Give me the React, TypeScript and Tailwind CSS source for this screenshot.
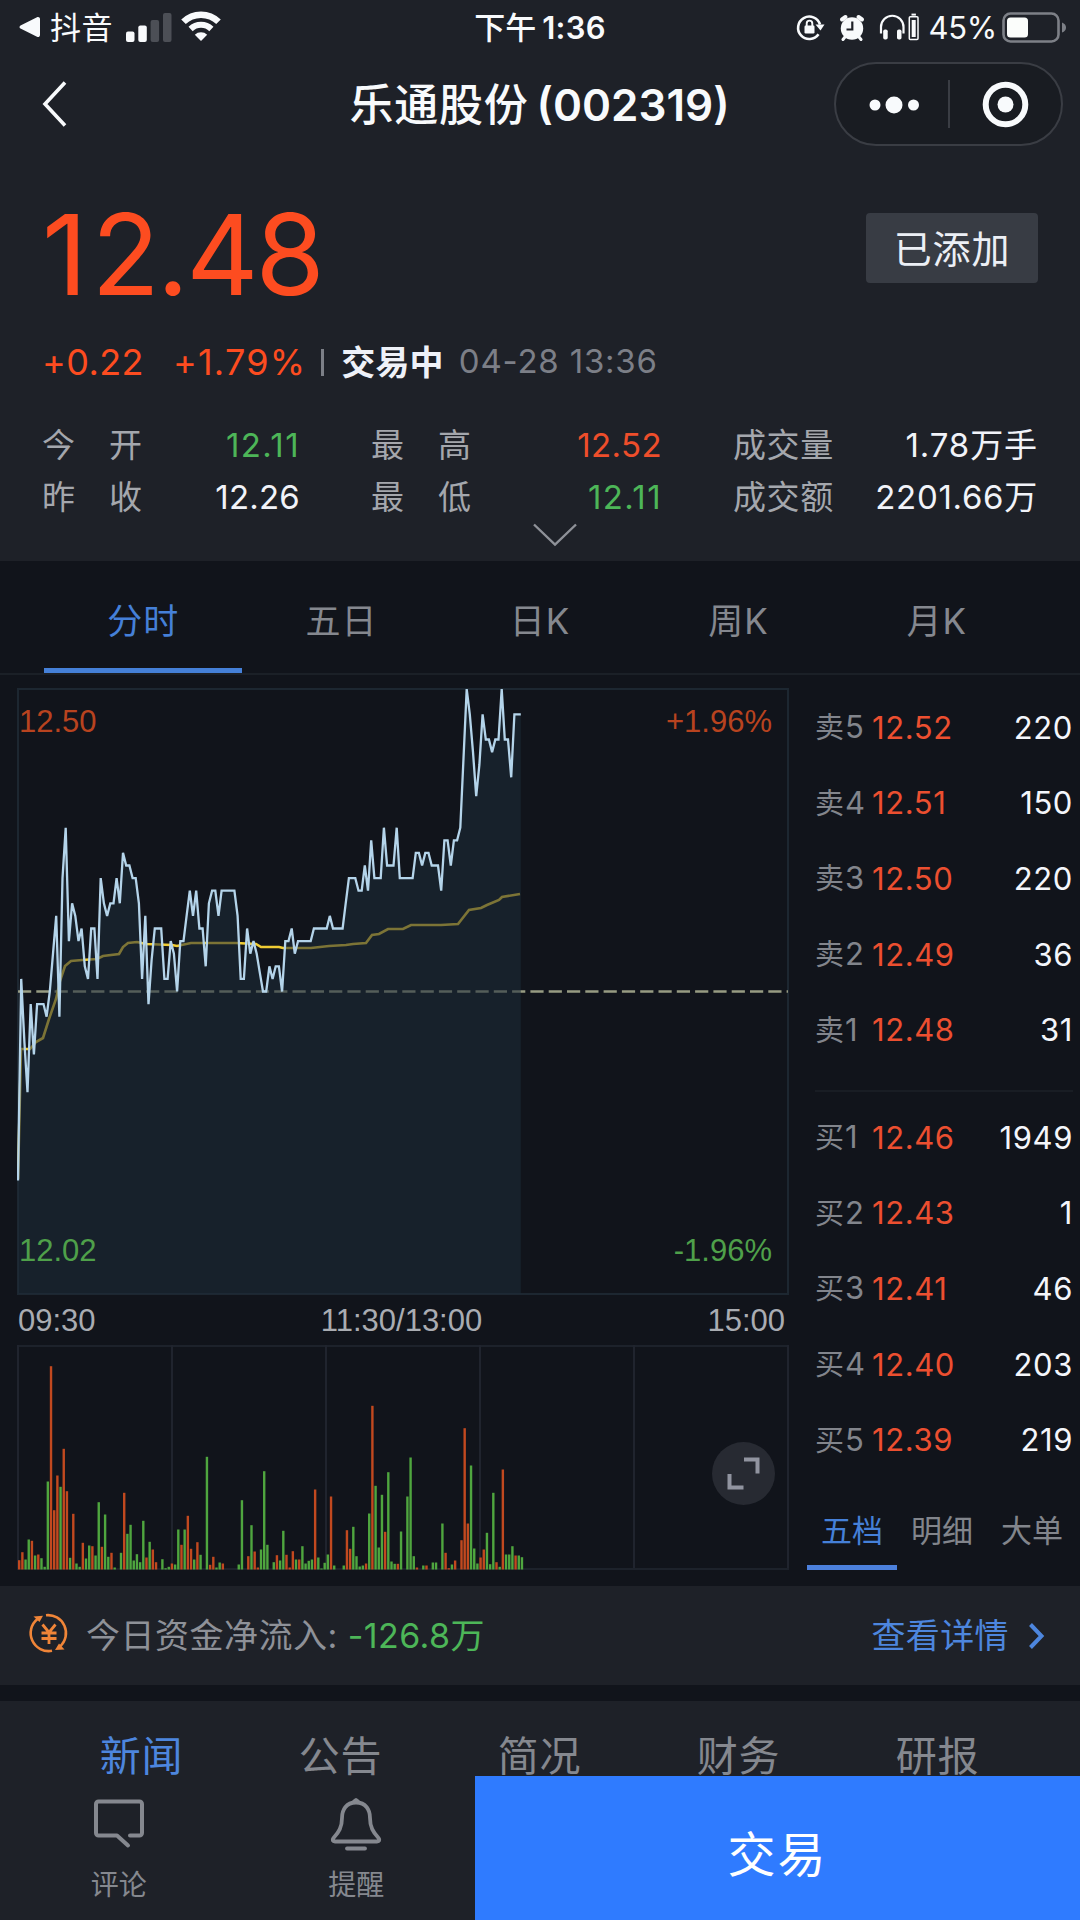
import clsx from "clsx";

const RED = "#c2491f";
const GREEN = "#4fa63f";

// one value per minute, in cents relative to yesterday's close (12.26)
const prices = [
    -15, 1, -4, -8, -1, -5, -1, -1, -1, -2, 0, 3, 6, -2, 9, 13, 4, 7, 6, 4,
    5, 2, 1, 5, 5, 1, 9, 7, 6, 7, 7, 9, 7, 11, 10, 10, 9, 9, 7, 1,
    6, -1, 2.5, 5, 5, 5, 1, 1, 4, 3, 0, 4, 4, 6, 8, 6, 8, 5, 5, 2,
    7, 8, 8, 6, 8, 8, 8, 8, 8, 6, 1, 1, 5, 3, 4, 3, 1.5, 0, 0, 2,
    1, 2, 2, 0, 4, 4, 5, 3, 4, 4, 4, 4, 4, 5, 5, 5, 5, 5, 6, 5,
    5, 5, 5, 7, 9, 9, 9, 8, 8, 10, 8, 12, 9, 9, 9, 13, 10, 10, 10, 13,
    9, 9, 9, 9, 9, 11, 11, 10, 11, 11, 10, 10, 10, 8, 12, 12, 10, 12, 12, 13,
    18.5, 24, 22, 19, 15.5, 18, 22, 20, 20, 19, 20, 20, 24, 20, 20, 17, 22, 22, 22,
];

const average = "1,491 4,361 13,361 19,354 26,350 32,331 39,311 43,293 48,278 54,273 65,272 80,271 86,268 102,266 106,259 111,255 120,254 129,256 155,257 160,258 174,255 219,255 239,256 244,259 262,259 266,260 294,260 312,258 329,257 336,256 349,255 355,247 362,246 371,241 386,241 394,237 424,237 441,236 452,222 464,220 470,217 482,212 485,209 503,206";

// up minutes are positive, down minutes negative
const volumes = [
    28, 52, -30, -90, 86, -42, 45, -34, -8, -264, 610, 178, 282, -248, 362, 235, -35, 167, -18, -8,
    80, -33, -72, 70, -42, -202, 68, -165, -38, 50, -6, 0, -50, 230, -107, -134, -27, -46, -22, -146,
    36, -83, 60, 22, 0, -31, -4, -8, 18, -15, -120, 74, -120, 161, 62, -30, 82, -44, 0, -338,
    14, 38, -6, -21, 18, 0, 0, 0, 0, -15, -208, 0, 40, -133, 54, 6, -60, -295, -74, 0,
    -22, 43, -27, -116, 44, 6, 55, -30, 30, -70, -18, -26, -30, 240, -36, -3, -20, -45, 219, -12,
    0, 0, -12, 118, 62, -128, -40, -9, -12, 18, -168, 491, -251, -66, -224, 113, -292, -24, -17, 17,
    -114, 0, -219, -336, -40, 6, 0, -12, 12, 0, -21, -21, 0, -138, 50, 4, -15, 27, 0, 88,
    424, 138, -312, -63, -18, 36, 60, -110, -16, -230, 22, -8, 300, -45, -45, -70, 42, -42, -37,
];

const STEP = 3.182;

const linePoints = prices
    .map((p, i) => `${(1 + i * STEP).toFixed(1)},${(303.5 - p * 12.6).toFixed(1)}`)
    .join(" ");

const sells = [
    ["卖5", "12.52", "220"],
    ["卖4", "12.51", "150"],
    ["卖3", "12.50", "220"],
    ["卖2", "12.49", "36"],
    ["卖1", "12.48", "31"],
];

const buys = [
    ["买1", "12.46", "1949"],
    ["买2", "12.43", "1"],
    ["买3", "12.41", "46"],
    ["买4", "12.40", "203"],
    ["买5", "12.39", "219"],
];

function StatusBar() {
    return (
        <div className="flex h-[54px] items-center justify-between pl-[19px] pr-[14px] text-[31px] leading-[31px]">
            <div className="flex w-[400px] items-center">
                <svg width="21" height="22" viewBox="0 0 21 22" fill="#f8fafc">
                    <path d="M1.5 9.4 18 1.2c1.5-.7 3 .2 3 1.8v16c0 1.6-1.5 2.5-3 1.8L1.5 12.6c-1.3-.7-1.3-2.5 0-3.2Z" />
                </svg>
                <span className="ml-[10px] tracking-[0.5px]">抖音</span>
                <svg className="ml-[13px]" width="46" height="29" viewBox="0 0 46 29">
                    <rect x="0" y="18.5" width="8.5" height="10.5" rx="2" fill="#f8fafc" />
                    <rect x="12.3" y="12.5" width="8.5" height="16.5" rx="2" fill="#f8fafc" />
                    <rect x="24.6" y="7" width="8.5" height="22" rx="2" fill="#4c4f56" />
                    <rect x="37" y="0" width="8.5" height="29" rx="2" fill="#4c4f56" />
                </svg>
                <svg className="mb-[2px] ml-[9px]" width="40" height="30" viewBox="0 0 40 30" fill="none" stroke="#f8fafc">
                    <path d="M2.5 10.8a25 25 0 0 1 35 0" strokeWidth="6.5" />
                    <path d="M9.6 18a15 15 0 0 1 20.8 0" strokeWidth="6" />
                    <path d="M20 30l-6.2-6.2a9 9 0 0 1 12.4 0Z" fill="#f8fafc" stroke="none" />
                </svg>
            </div>
            <div className="mr-[5px] whitespace-nowrap font-medium">下午<span className="ml-[6px] font-semibold tracking-[0.2px]">1:36</span></div>
            <div className="flex w-[400px] items-center justify-end">
                <svg width="29" height="28" viewBox="0 0 29 28" fill="none" stroke="#f8fafc" strokeWidth="2.6">
                    <path d="M22.5 21.2A11.2 11.2 0 1 1 24 11.5" />
                    <path d="M19.5 11.5h9L24.5 17.5Z" fill="#f8fafc" stroke="none" />
                    <rect x="8.5" y="12.5" width="10" height="8" rx="1.2" fill="#f8fafc" stroke="none" />
                    <path d="M10.7 13v-2.6a2.8 2.8 0 0 1 5.6 0V13" strokeWidth="1.9" />
                </svg>
                <svg className="ml-[14px]" width="26" height="27" viewBox="0 0 26 27">
                    <circle cx="13" cy="14.5" r="11.2" fill="#f8fafc" />
                    <path d="M3 5.5 6.5 3M19.5 3l3.500 2.5" stroke="#f8fafc" strokeWidth="4" strokeLinecap="round" />
                    <path d="M6 23l-2 2.5M20 23l2 2.5" stroke="#f8fafc" strokeWidth="3" strokeLinecap="round" />
                    <path d="M13.3 7.5v8H7.5" stroke="#1e2128" strokeWidth="2.2" fill="none" />
                </svg>
                <svg className="ml-[14px]" width="41" height="28" viewBox="0 0 41 28" fill="none" stroke="#f8fafc">
                    <path d="M2 20.5V14a11 11 0 0 1 22.5 0v6.5" strokeWidth="2.2" />
                    <rect x="4.2" y="16.5" width="4.5" height="10" rx="1.8" fill="#f8fafc" stroke="none" />
                    <rect x="18" y="16.5" width="4.5" height="10" rx="1.8" fill="#f8fafc" stroke="none" />
                    <rect x="30.3" y="3.7" width="8.7" height="22.7" rx="1" strokeWidth="1.5" />
                    <rect x="32.7" y="7" width="4" height="17" fill="#f8fafc" stroke="none" />
                    <path d="M32.5 1.6h4.4" strokeWidth="2" />
                </svg>
                <span className="ml-[9px] tracking-[-0.3px]">45%</span>
                <svg className="ml-[5px]" width="64" height="31" viewBox="0 0 64 31">
                    <rect x="1.5" y="1.5" width="55" height="28" rx="7" fill="none" stroke="#7d8087" strokeWidth="2.6" />
                    <rect x="5" y="5.5" width="21" height="20" rx="3.5" fill="#fbfdfb" />
                    <path d="M60 10.5q4 1.5 4 5t-4 5Z" fill="#7d8087" />
                </svg>
            </div>
        </div>
    );
}

function NavBar() {
    return (
        <div className="flex h-[102px] items-center justify-between pb-[2px] pl-[42px] pr-[17px]">
            <div className="w-[229px]">
                <svg width="26" height="46" viewBox="0 0 26 46" fill="none" stroke="#f8fafc" strokeWidth="3.6">
                    <path d="M23 1.5 3 23l20 21.5" />
                </svg>
            </div>
            <div className="mr-[26px] whitespace-nowrap pt-[1px] text-[44px] font-medium leading-[60px] tracking-[0.8px]">
                乐通股份<span className="ml-[8px] font-semibold tracking-[0px]">(002319)</span>
            </div>
            <div className="flex h-[84px] w-[229px] items-center rounded-full border-2 border-[#3a3d44] bg-[#191c22]">
                <svg width="225" height="80" viewBox="0 0 225 80" fill="#f8fafc">
                    <circle cx="39" cy="41" r="5.5" />
                    <circle cx="58" cy="41" r="8.5" />
                    <circle cx="77.5" cy="41" r="5.5" />
                    <rect x="112" y="16" width="2" height="48" fill="#3a3d44" />
                    <circle cx="169.5" cy="40.5" r="19.8" fill="none" stroke="#f8fafc" strokeWidth="6" />
                    <circle cx="169.5" cy="40.5" r="8" />
                </svg>
            </div>
        </div>
    );
}

function Quote() {
    return (
        <div className="relative h-[405px] px-[42px]">
            <div className="flex h-[164px] items-start justify-between">
                <div className="pt-[42px] text-[112px] leading-[112px] tracking-[-3px] text-[#fd4c20]">
                    <span className="tracking-[4px]">1</span>2.48
                </div>
                <div className="mt-[57px] flex h-[70px] w-[172px] items-center justify-center rounded-[4px] bg-[#383c44] pt-[2px] text-[38px] tracking-[0.8px] text-[#eceff5]">
                    已添加
                </div>
            </div>
            <div className="flex h-[84px] items-center whitespace-nowrap text-[36px] text-[#fd4c20]">
                <span className="w-[131px] tracking-[0.4px]">+0.22</span>
                <span className="tracking-[1.2px]">+1.79%</span>
                <span className="ml-[15px] h-[27px] w-[3px] bg-[#7c7f87]" />
                <span className="ml-[17px] text-[34px] font-bold tracking-[0.2px] text-[#eef1f8]">交易中</span>
                <span className="ml-[15px] text-[33px] tracking-[0.8px] text-[#7c7f87]">04-28 13:36</span>
            </div>
            <div className="grid grid-cols-[258px_71px_291px_71px_305px] pt-[15px] text-[33px] leading-[52px] text-[#a4a7ad]">
                <div className="flex justify-between">
                    <span className="tracking-[34px]">今开</span>
                    <span className="tracking-[1.4px] text-[#4db658]">12.11</span>
                </div>
                <div />
                <div className="flex justify-between">
                    <span className="tracking-[34px]">最高</span>
                    <span className="tracking-[0.4px] text-[#ee4e2b]">12.52</span>
                </div>
                <div />
                <div className="flex justify-between">
                    <span className="tracking-[0.6px]">成交量</span>
                    <span className="tracking-[0.9px] text-[#f1f3f9]">1.78万手</span>
                </div>
                <div className="flex justify-between">
                    <span className="tracking-[34px]">昨收</span>
                    <span className="tracking-[0.2px] text-[#f1f3f9]">12.26</span>
                </div>
                <div />
                <div className="flex justify-between">
                    <span className="tracking-[34px]">最低</span>
                    <span className="tracking-[1.4px] text-[#4db658]">12.11</span>
                </div>
                <div />
                <div className="flex justify-between">
                    <span className="tracking-[0.6px]">成交额</span>
                    <span className="tracking-[0.7px] text-[#f1f3f9]">2201.66万</span>
                </div>
            </div>
            <svg className="absolute left-[532px] top-[367px]" width="46" height="24" viewBox="0 0 46 24" fill="none" stroke="#8e9198" strokeWidth="2.4">
                <path d="M2 1.5 23 21.5 44 1.5" />
            </svg>
        </div>
    );
}

function PeriodTabs() {
    return (
        <div className="flex h-[114px] border-b-2 border-[#1b2027] px-[44px]">
            {["分时", "五日", "日K", "周K", "月K"].map((tab, index) => (
                <div
                    key={tab}
                    className={clsx(
                        "flex flex-1 justify-center border-b-[5px] pt-[37px] text-[35px] leading-[46px] tracking-[1px]",
                        index === 0 ? "border-[#4580d8] text-[#4580d8]" : "border-transparent text-[#85888f]"
                    )}>
                    {tab}
                </div>
            ))}
        </div>
    );
}

function PriceChart() {
    return (
        <div className="relative h-[608px] w-[772px] font-['Liberation_Sans',Arial,sans-serif] text-[31px] leading-[36px]">
            <svg width="772" height="608" viewBox="0 0 772 608" fill="none">
                <rect x="1" y="1" width="770" height="605" stroke="#1d2731" strokeWidth="2" />
                <path d="M1 303.5H771" stroke="#979b82" strokeWidth="2.4" strokeDasharray="13.2 5.1" />
                <polyline points={average} stroke="#f0cc34" strokeWidth="2.6" />
                <polygon points={`1,606 ${linePoints} 503.8,606`} fill="#1d2c39" fillOpacity="0.55" />
                <polyline points={linePoints} stroke="#b4d4ea" strokeWidth="2.3" />
            </svg>
            <span className="absolute left-[2px] top-[16px] text-[#b8431f]">12.50</span>
            <span className="absolute right-[17px] top-[16px] text-[#b8431f]">+1.96%</span>
            <span className="absolute left-[2px] top-[545px] text-[#4fa04a]">12.02</span>
            <span className="absolute right-[17px] top-[545px] text-[#4fa04a]">-1.96%</span>
        </div>
    );
}

function VolumeChart() {
    return (
        <div className="relative h-[227px]">
            <svg width="772" height="227" viewBox="0 0 772 227" fill="none">
                <path d="M0 1H772M0 224H772" stroke="#1d222b" strokeWidth="2" />
                {[1, 155, 309, 463, 617, 771].map((x) => (
                    <path key={x} d={`M${x} 0V223`} stroke="#20242e" strokeWidth="2" />
                ))}
                {volumes.map((v, i) => (
                    <rect
                        key={i}
                        x={(1 + i * STEP).toFixed(2)}
                        y={(224.5 - Math.abs(v) / 3).toFixed(1)}
                        width="2.4"
                        height={(Math.abs(v) / 3).toFixed(1)}
                        fill={v > 0 ? RED : GREEN}
                    />
                ))}
            </svg>
            <div className="absolute left-[695px] top-[97px] flex h-[63px] w-[63px] items-center justify-center rounded-full bg-[#272a32]">
                <svg width="33" height="33" viewBox="0 0 33 33" fill="none" stroke="#9194a0" strokeWidth="4">
                    <path d="M17 2.5h13.5V16.5M2.5 17v13.5H16.5" />
                </svg>
            </div>
        </div>
    );
}

function BookRow({ row }: { row: string[] }) {
    return (
        <div className="flex h-[75.6px] items-center text-[31px] leading-[40px]">
            <span className="w-[57px] whitespace-nowrap text-[#82858c]"><span className="text-[29px]">{row[0][0]}</span><span className="ml-[1px]">{row[0][1]}</span></span>
            <span className="tracking-[0.6px] text-[#ec4f30]">{row[1]}</span>
            <span className="ml-auto tracking-[0.6px] text-[#f4f6fb]">{row[2]}</span>
        </div>
    );
}

function OrderBook() {
    return (
        <div className="w-[273px]">
            <div className="pl-[8px] pr-[7px] pt-[2px]">
                {sells.map((row) => <BookRow key={row[0]} row={row} />)}
                <div className="mb-[8px] mt-[22px] h-[2px] bg-[#191d24]" />
                {buys.map((row) => <BookRow key={row[0]} row={row} />)}
            </div>
            <div className="mt-[23px] flex h-[69px] text-[31px] leading-[42px]">
                {["五档", "明细", "大单"].map((tab, index) => (
                    <div
                        key={tab}
                        className={clsx(
                            "flex w-[90px] justify-center border-b-[5px] pt-[9px]",
                            index === 0 ? "border-[#4c80dc] text-[#4580d8]" : "border-transparent text-[#82858c]"
                        )}>
                        {tab}
                    </div>
                ))}
            </div>
        </div>
    );
}

function MoneyFlow() {
    return (
        <div className="flex h-[99px] items-center bg-[#1e2128] pl-[28px] pr-[35px] text-[34px] leading-[50px]">
            <svg className="mb-[5px]" width="42" height="42" viewBox="0 0 42 42" fill="none" stroke="#f08538" strokeWidth="2.6">
                <path d="M18 3.2A18 18 0 0 1 32 34.5" />
                <path d="M24 38.8A18 18 0 0 1 9.5 7" />
                <path d="M5.5 4.5 15 3.8 11.5 10Z" fill="#f08538" stroke="none" />
                <path d="M36.5 37.5 27 38 31 31.5Z" fill="#f08538" stroke="none" />
                <path d="m14.5 12.5 6.5 8 6.5-8M21 20.5V32M13.5 21h15M13.5 26.5h15" strokeWidth="2.8" />
            </svg>
            <span className="ml-[16px] tracking-[0.5px] text-[#8e9198]">今日资金净流入:</span>
            <span className="ml-[10px] tracking-[0.4px] text-[#4db658]">-126.8万</span>
            <span className="ml-auto tracking-[0.4px] text-[#4d86de]">查看详情</span>
            <svg className="ml-[19px]" width="17" height="26" viewBox="0 0 17 26" fill="none" stroke="#4d86de" strokeWidth="4">
                <path d="m2.5 1.5 11 11.5-11 11.5" />
            </svg>
        </div>
    );
}

function BottomBar() {
    return (
        <div className="flex h-[144px] text-[28px] leading-[36px] text-[#85888f]">
            <div className="flex w-[237.5px] flex-col items-center pt-[22px]">
                <svg width="52" height="52" viewBox="0 0 52 52" fill="none" stroke="#85888f" strokeWidth="4" strokeLinecap="round" strokeLinejoin="round">
                    <path d="M37 37.5h9.500a2.500 2.500 0 0 0 2.500-2.500V6a2.500 2.500 0 0 0-2.500-2.500h-41A2.500 2.500 0 0 0 3 6v29a2.500 2.500 0 0 0 2.500 2.500H24L35 47.500" />
                </svg>
                <span className="mt-[17px]">评论</span>
            </div>
            <div className="flex w-[237.5px] flex-col items-center pt-[21px]">
                <svg width="52" height="54" viewBox="0 0 52 54" fill="none" stroke="#85888f" strokeWidth="3.8" strokeLinecap="round" strokeLinejoin="round">
                    <path d="M26 5.5C16 5.5 12 13 12 21c0 9-3 14-8.5 20-1.5 2-.8 3.5 1.5 3.5h42c2.3 0 3-1.5 1.5-3.5C43 35 40 30 40 21c0-8-4-15.5-14-15.5Z" />
                    <path d="M17 51.5h18" />
                    <path d="M24 4.5 26 3l2 1.5" />
                </svg>
                <span className="mt-[16px]">提醒</span>
            </div>
            <div className="flex flex-1 items-center justify-center bg-[#2f7bff] pt-[13px] text-[48px] tracking-[2px] text-white">交易</div>
        </div>
    );
}

export default function App() {
    return (
        <div className="flex h-[1920px] w-[1080px] flex-col overflow-hidden bg-[#11141b] font-['Inter','Noto_Sans_CJK_SC',sans-serif] text-[#f8fafc]">
            <div className="bg-[#1e2128]">
                <StatusBar />
                <NavBar />
                <Quote />
            </div>
            <PeriodTabs />
            <div className="flex h-[911px] pl-[17px] pt-[13px]">
                <div className="w-[790px]">
                    <PriceChart />
                    <div className="grid h-[49px] w-[772px] grid-cols-3 items-center pl-[1px] pr-[4px] pt-[2px] font-['Liberation_Sans',Arial,sans-serif] text-[31px] text-[#a9acb2]">
                        <span>09:30</span>
                        <span className="text-center">11:30/13:00</span>
                        <span className="text-right">15:00</span>
                    </div>
                    <VolumeChart />
                </div>
                <OrderBook />
            </div>
            <MoneyFlow />
            <div className="mt-[16px] flex h-[75px] bg-[#1e2128] pl-[42px] pr-[43px] pt-[35px] text-[41px] leading-[41px] tracking-[0.7px] text-[#85888f]">
                {["新闻", "公告", "简况", "财务", "研报"].map((tab, index) => (
                    <div key={tab} className={clsx("flex-1 text-center", index === 0 && "text-[#4d86de]")}>{tab}</div>
                ))}
            </div>
            <div className="bg-[#1e2128]">
                <BottomBar />
            </div>
        </div>
    );
}
